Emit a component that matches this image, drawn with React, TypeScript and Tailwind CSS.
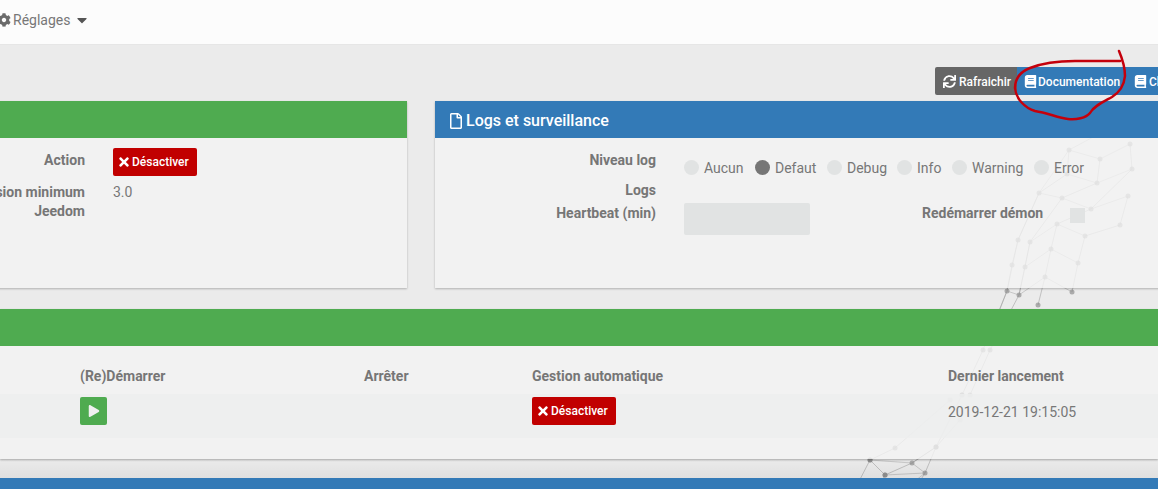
import { FaBook, FaCaretDown, FaCog, FaPlay, FaRegFile, FaSync, FaTimes } from "react-icons/fa";

// nodes of the mesh picture behind the panels
const MESH: [number, number][][] = [
  [[1069, 150], [1067, 174], [1039, 193], [1018, 240], [1012, 265], [1007, 291], [983, 350], [962, 395]],
  [[1100, 159], [1097, 183], [1062, 198], [1030, 242], [1025, 267], [1019, 295], [990, 350], [970, 395]],
  [[1130, 144], [1132, 169], [1091, 209], [1057, 224], [1051, 249], [1045, 277], [1038, 305]],
  [[1128, 196], [1120, 225], [1085, 236], [1078, 263], [1072, 292]],
  [[962, 395], [936, 447], [912, 463], [885, 475]],
  [[950, 400], [895, 448], [870, 460], [855, 489]],
  [[960, 420], [936, 447], [925, 473], [915, 489]],
  [[870, 460], [885, 475], [878, 489]],
];

const CROSS: string[] = [
  "1069,150 1100,159 1130,144",
  "1067,174 1097,183 1132,169",
  "1039,193 1062,198 1091,209 1128,196",
  "1030,242 1057,224 1085,236",
  "1025,267 1051,249 1078,263",
  "1019,295 1045,277 1072,292",
  "1007,291 1018,240 1039,193 1069,150 1110,128",
  "1000,309 1007,291 1019,295 1030,242",
  "870,460 912,463 936,447",
  "885,475 925,473",
  "912,463 925,473 905,489",
];

function Mesh() {
  return (
    <svg className="absolute inset-0 z-0 blur-[0.6px]" width="1158" height="489" viewBox="0 0 1158 489">
      {MESH.map((line, i) => (
        <g key={i}>
          <polyline points={line.map((p) => p.join(",")).join(" ")} fill="none" stroke="#9c9c9c" strokeOpacity="0.55" />
          {line.map((p, j) => (
            <circle key={j} cx={p[0]} cy={p[1]} r="2.5" fill="#808080" fillOpacity="0.6" />
          ))}
        </g>
      ))}
      {CROSS.map((points) => (
        <polyline key={points} points={points} fill="none" stroke="#9c9c9c" strokeOpacity="0.45" />
      ))}
    </svg>
  );
}

function RedCircle() {
  return (
    <svg className="absolute inset-0 z-20 pointer-events-none" width="1158" height="489" viewBox="0 0 1158 489">
      <path
        d="M1119 51 C1122 58 1125 68 1125 76 C1124 86 1120 92 1112 97 C1103 102 1094 106 1090 113 C1086 118 1076 120 1068 119 C1058 118 1048 113 1035 111 C1025 108 1016 99 1015 88 C1015 78 1020 72 1030 68 C1045 62 1060 61 1075 61 L1120 61"
        fill="none"
        stroke="#c4000c"
        strokeWidth="2.5"
        strokeLinecap="round"
      />
    </svg>
  );
}

function DisableButton() {
  return (
    <button className="h-[28px] w-[84px] bg-[#c10000] rounded-[2px] text-white text-xs font-medium flex items-center pl-[4px]">
      <FaTimes className="text-[14px] mr-[1px] shrink-0" />
      Désactiver
    </button>
  );
}

function Radio({ label, checked, className }: { label: string; checked?: boolean; className: string }) {
  return (
    <div className={`flex items-center gap-[5px] ${className}`}>
      <span className={`w-[15px] h-[15px] rounded-full ${checked ? "bg-[#767676]" : "bg-[#e1e3e3]"}`} />
      <span>{label}</span>
    </div>
  );
}

function Label({ children }: { children: React.ReactNode }) {
  return <div className="font-bold text-right text-[#767676] leading-[19px]">{children}</div>;
}

export default function App() {
  return (
    <div
      className="relative w-[1158px] h-[489px] overflow-hidden bg-[#ebebeb] text-sm text-[#777777]"
      style={{ fontFamily: "Roboto, sans-serif" }}
    >
      <Mesh />
      <div className="relative z-10">
        {/* Navbar */}
        <div className="h-[45px] bg-[#fcfcfc] border-b border-[#e6e6e6] flex items-center pb-[5px] -ml-[3px]">
          <FaCog className="text-sm mr-[2px] text-[#6b6b6b]" />
          <span>Réglages</span>
          <FaCaretDown className="ml-[4px] text-base text-[#555555]" />
        </div>

        {/* Toolbar */}
        <div className="h-[56px] pt-[22px] flex justify-start pl-[935px] whitespace-nowrap">
          <div className="h-[28px] flex items-center text-white text-xs font-medium">
            <button className="h-full w-[82px] bg-[#666666] rounded-l-[2px] flex items-center pt-[1px] pl-[8px] gap-[3px] shrink-0">
              <FaSync className="text-[13px] shrink-0" />
              Rafraichir
            </button>
            <button className="h-full w-[111px] bg-[#337ab7] flex items-center pt-[1px] pl-[7px] gap-[1px] shrink-0">
              <FaBook className="text-[13px] shrink-0" />
              Documentation
            </button>
            <button className="h-full w-[100px] bg-[#337ab7] flex items-center pt-[1px] pl-[6px] gap-[2px] shrink-0">
              <FaBook className="text-[13px] shrink-0" />
              Changelog
            </button>
          </div>
        </div>

        {/* Top panels */}
        <div className="flex gap-[28px] -ml-[300px] w-[1800px]">
          <div className="w-[707px] h-[187px] bg-[#f4f4f4]/80 shadow-[0_1px_2px_rgba(0,0,0,0.25)]">
            <div className="h-[37px] bg-[#4fab50]" />
            <div className="grid grid-cols-[385px_1fr] gap-x-[28px] pt-[10px]">
              <div className="pt-[3px]"><Label>Action</Label></div>
              <DisableButton />
              <div className="pt-[7px]">
                <Label>Version minimum</Label>
                <Label>Jeedom</Label>
              </div>
              <div className="pt-[7px] leading-[19px]">3.0</div>
            </div>
          </div>

          <div className="w-[800px] h-[187px] bg-[#f4f4f4]/80 shadow-[0_1px_2px_rgba(0,0,0,0.25)]">
            <div className="h-[37px] bg-[#337ab7] text-white text-base font-medium flex items-center pt-[3px] pl-[13px] gap-[2px]">
              <FaRegFile className="text-[16px] shrink-0" />
              Logs et surveillance
            </div>
            <div className="flex">
              <div className="w-[221px] pt-[13px]">
                <Label>Niveau log</Label>
                <div className="mt-[11px]"><Label>Logs</Label></div>
                <div className="mt-[4px]"><Label>Heartbeat (min)</Label></div>
              </div>
              <div className="ml-[28px] pt-[21px]">
                <div className="flex h-[17px] items-center whitespace-nowrap">
                  <Radio label="Aucun" className="w-[71px]" />
                  <Radio label="Defaut" checked className="w-[72px]" />
                  <Radio label="Debug" className="w-[70px]" />
                  <Radio label="Info" className="w-[55px]" />
                  <Radio label="Warning" className="w-[82px]" />
                  <Radio label="Error" className="w-[60px]" />
                </div>
                <div className="flex mt-[27px]">
                  <div className="w-[126px] h-[32px] bg-[#e1e3e3] rounded-[2px]" />
                  <div className="ml-[112px] font-bold text-[#767676] leading-[19px] pt-[1px]">Redémarrer démon</div>
                  <div className="ml-[27px] mt-[5px] w-[15px] h-[15px] bg-[#e1e3e3]" />
                </div>
              </div>
            </div>
          </div>
        </div>

        {/* Daemon panel */}
        <div className="mt-[21px] h-[150px] bg-[#f4f4f4]/80 shadow-[0_1px_2px_rgba(0,0,0,0.3)]">
          <div className="h-[37px] bg-[#4fab50]" />
          <div className="grid grid-cols-[284px_168px_416px_1fr] pl-[80px] h-[48px] items-center pt-[11px] font-bold text-[#767676]">
            <div>(Re)Démarrer</div>
            <div>Arrêter</div>
            <div>Gestion automatique</div>
            <div>Dernier lancement</div>
          </div>
          <div className="grid grid-cols-[284px_168px_416px_1fr] pl-[80px] h-[44px] pt-[3px] bg-[#eceded]/80">
            <button className="w-[27px] h-[28px] bg-[#4fab50] rounded-[2px] flex items-center justify-center text-[#f0f0f0]">
              <FaPlay className="text-[12px]" />
            </button>
            <div />
            <DisableButton />
            <div className="leading-[30px]">2019-12-21 19:15:05</div>
          </div>
        </div>

        {/* Gap above the next panel darkens towards the bottom */}
        <div className="h-[19px] bg-linear-to-b from-transparent to-black/5" />

        {/* Next panel header */}
        <div className="h-[37px] bg-[#337ab7]" />
      </div>
      <RedCircle />
    </div>
  );
}
